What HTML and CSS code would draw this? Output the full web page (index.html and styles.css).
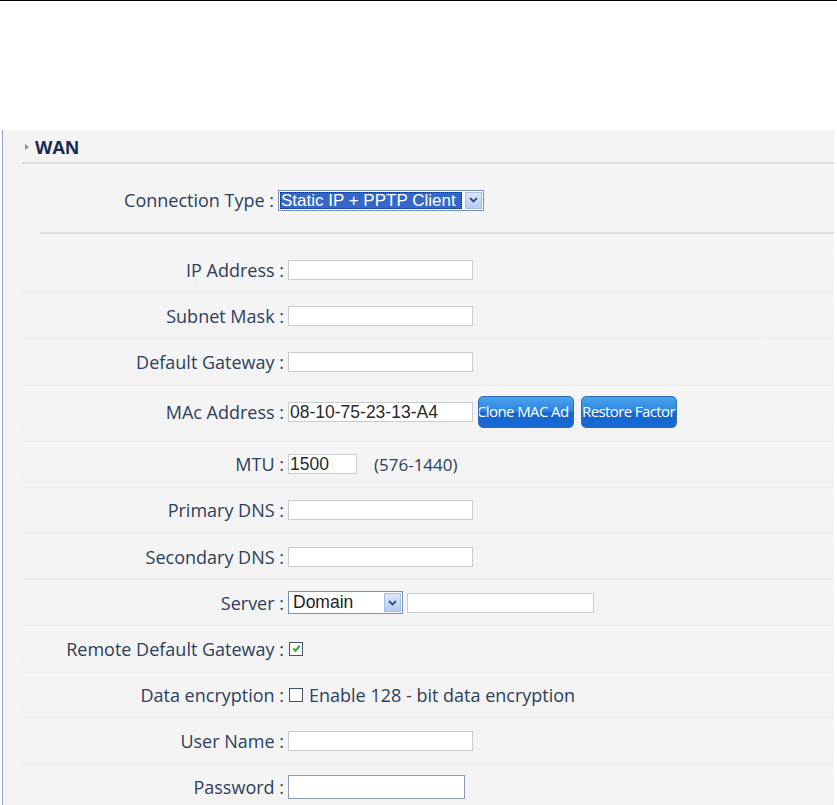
FILE: index.html
```html
<!DOCTYPE html>
<html>
<head>
<meta charset="utf-8">
<link rel="stylesheet" href="styles.css">
</head>
<body>
<div class="topline"></div>
<div class="panel">
  <div class="title"><span class="arrow"></span><span class="title-text">WAN</span></div>
  <div class="conn">
    <span class="label">Connection Type :</span>
    <div class="select sel-conn"><span class="sel-text hl">Static IP + PPTP Client</span><span class="sel-btn"><svg width="9" height="6" viewBox="0 0 9 6"><path d="M1 1 L4.5 4.5 L8 1" fill="none" stroke="#2a4a8a" stroke-width="1.8"/></svg></span></div>
  </div>
  <div class="form">
    <div class="row"><span class="label">IP Address :</span><span class="input"></span></div>
    <div class="row"><span class="label">Subnet Mask :</span><span class="input"></span></div>
    <div class="row"><span class="label">Default Gateway :</span><span class="input"></span></div>
    <div class="row row-mac"><span class="label">MAc Address :</span><span class="input">08-10-75-23-13-A4</span><span class="btn btn1">Clone MAC Ad</span><span class="btn btn2">Restore Factor</span></div>
    <div class="row"><span class="label">MTU :</span><span class="input input-mtu">1500</span><span class="hint">(576-1440)</span></div>
    <div class="row"><span class="label">Primary DNS :</span><span class="input"></span></div>
    <div class="row"><span class="label">Secondary DNS :</span><span class="input"></span></div>
    <div class="row"><span class="label">Server :</span><div class="select sel-server"><span class="sel-text">Domain</span><span class="sel-btn"><svg width="9" height="6" viewBox="0 0 9 6"><path d="M1 1 L4.5 4.5 L8 1" fill="none" stroke="#2a4a8a" stroke-width="1.8"/></svg></span></div><span class="input input-server"></span></div>
    <div class="row"><span class="label">Remote Default Gateway :</span><span class="check"><svg width="12" height="12" viewBox="0 0 12 12"><path d="M2.5 6 L5 8.5 L9.5 3" fill="none" stroke="#34a534" stroke-width="2.2"/></svg></span></div>
    <div class="row"><span class="label">Data encryption :</span><span class="check"></span><span class="opt">Enable 128 - bit data encryption</span></div>
    <div class="row"><span class="label">User Name :</span><span class="input"></span></div>
    <div class="row"><span class="label">Password :</span><span class="input input-pass"></span></div>
  </div>
</div>
</body>
</html>
```
FILE: styles.css
```css
html, body {
  margin: 0;
  padding: 0;
  background: #ffffff;
  overflow: hidden;
}
body {
  width: 837px;
  height: 805px;
  font-family: "Open Sans", "Noto Sans", sans-serif;
}
.topline {
  height: 1px;
  background: #000;
  margin-bottom: 129px;
}
.panel {
  margin-left: 2px;
  width: 831px;
  height: 680px;
  border-left: 1px solid #8ea3bf;
  background: #f4f4f4;
}
.title {
  height: 34px;
  margin-left: 19px;
  border-bottom: 2px solid #dedede;
  display: flex;
  align-items: center;
  padding-top: 1px;
  box-sizing: border-box;
}
.arrow {
  width: 0;
  height: 0;
  border-left: 4px solid #8a8f99;
  border-top: 3px solid transparent;
  border-bottom: 3px solid transparent;
  margin-left: 3px;
  margin-right: 6px;
}
.title-text {
  font-family: "Open Sans", sans-serif;
  font-weight: 700;
  font-size: 18px;
  color: #1b2b52;
}
.conn {
  height: 70px;
  margin-left: 37px;
  border-bottom: 2px solid #dedede;
  display: flex;
  align-items: center;
  box-sizing: border-box;
  padding-top: 4px;
}
.conn .label {
  width: 234px;
}
.label {
  font-size: 18px;
  color: #2d405c;
  text-align: right;
  white-space: nowrap;
  margin-right: 4px;
  flex: none;
}
.form {
  margin-left: 19px;
  padding-top: 13px;
}
.row {
  height: 46.2px;
  display: flex;
  align-items: center;
  border-bottom: 1px solid #eeeeee;
  box-sizing: border-box;
  background: linear-gradient(#f5f5f5, #f2f2f2);
}
.row .label {
  width: 262px;
}
.row-mac {
  height: 56px;
  padding-bottom: 2px;
}
.input {
  width: 185px;
  height: 20px;
  background: #fff;
  border: 1px solid #c9ccd1;
  box-sizing: border-box;
  font-family: "Liberation Sans", Arial, sans-serif;
  font-size: 17.5px;
  color: #2a2a2a;
  padding-left: 1px;
  line-height: 18px;
  flex: none;
  white-space: nowrap;
  overflow: hidden;
}
.input-mtu {
  width: 69px;
}
.hint {
  margin-left: 17px;
  font-size: 17px;
  color: #2d405c;
}
.input-server {
  width: 187px;
  margin-left: 4px;
}
.input-pass {
  width: 177px;
  height: 24px;
  border-color: #8d9bb0;
}
.btn {
  height: 32px;
  width: 96px;
  margin-left: 5px;
  border-radius: 5px;
  background: linear-gradient(#4aa3ef 0%, #2f86e0 45%, #1565cf 55%, #1a6ad6 100%);
  border: 1px solid #2d6cb8;
  box-sizing: border-box;
  color: #fff;
  font-family: "Open Sans", sans-serif;
  font-size: 15px;
  letter-spacing: -0.6px;
  line-height: 29px;
  overflow: hidden;
  white-space: nowrap;
  text-indent: -2px;
  flex: none;
}
.btn2 {
  width: 96px;
  margin-left: 7px;
  text-indent: 0;
}
.select {
  display: flex;
  align-items: center;
  background: #fff;
  border: 1px solid #7a8fb8;
  box-sizing: border-box;
  font-family: "Liberation Sans", Arial, sans-serif;
  font-size: 17.5px;
  flex: none;
}
.sel-conn {
  width: 206px;
  height: 21px;
  padding: 1px;
}
.sel-text {
  flex: 1;
  white-space: nowrap;
  padding-left: 2px;
  line-height: 17px;
  color: #222;
}
.sel-text.hl {
  flex: none;
  width: 182px;
  box-sizing: border-box;
  padding-left: 1px;
  background: #3467c8;
  color: #fff;
  outline: 1px dotted #0c2a6a;
  outline-offset: -1px;
  font-size: 17px;
}
.sel-btn {
  width: 17px;
  height: 17px;
  margin-left: auto;
  background: linear-gradient(#dbe7fb, #b5cbf2);
  border: 1px solid #a7bde6;
  box-sizing: border-box;
  display: flex;
  align-items: center;
  justify-content: center;
}
.sel-server {
  width: 115px;
  height: 23px;
  padding: 1px 1px 1px 0;
}
.sel-server .sel-text {
  padding-left: 4px;
}
.sel-server .sel-btn {
  height: 19px;
}
.check {
  width: 14px;
  height: 14px;
  border: 1px solid #44546f;
  background: #fff;
  box-sizing: border-box;
  display: flex;
  align-items: center;
  justify-content: center;
  flex: none;
  margin-left: 1px;
}
.check svg {
  width: 11px;
  height: 11px;
}
.opt {
  margin-left: 6px;
  font-size: 18px;
  color: #2d405c;
  white-space: nowrap;
}
```
